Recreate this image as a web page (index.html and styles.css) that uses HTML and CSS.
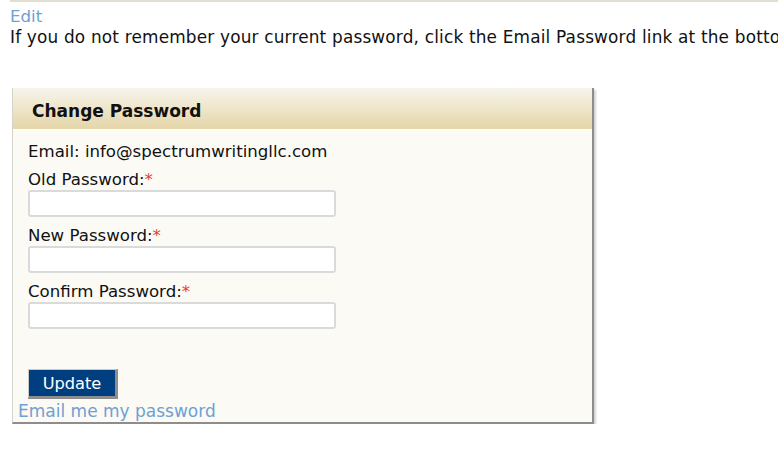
FILE: index.html
```html
<!DOCTYPE html>
<html>
<head>
<meta charset="utf-8">
<link rel="stylesheet" href="styles.css">
</head>
<body>
<div class="page">
  <div class="topline"></div>
  <a class="link edit" href="#">Edit</a>
  <p class="intro">If you do not remember your current password, click the Email Password link at the bottom of this form.</p>
  <div class="panel">
    <div class="panel-head">Change Password</div>
    <div class="panel-body">
      <div class="email">Email: info@spectrumwritingllc.com</div>
      <label class="lbl">Old Password:<span class="req">*</span></label>
      <input class="field" type="password">
      <label class="lbl">New Password:<span class="req">*</span></label>
      <input class="field" type="password">
      <label class="lbl">Confirm Password:<span class="req">*</span></label>
      <input class="field" type="password">
      <button class="btn" type="button">Update</button>
    </div>
    <a class="link mail" href="#">Email me my password</a>
  </div>
</div>
</body>
</html>
```
FILE: styles.css
```css
html, body {
  margin: 0;
  padding: 0;
  background: #ffffff;
  overflow: hidden;
}
body {
  font-family: "DejaVu Sans", Verdana, sans-serif;
  font-size: 16.6px;
  color: #111111;
}
.page {
  padding-left: 10px;
}
.topline {
  height: 2px;
  background: #e2ded2;
}
.link {
  color: #6f9fd3;
  text-decoration: none;
}
.edit {
  display: block;
  margin-top: 5px;
  line-height: 20px;
}
.intro {
  margin: 0;
  line-height: 20px;
  font-size: 16.9px;
  letter-spacing: 0.18px;
  white-space: nowrap;
  overflow: hidden;
}
.panel {
  margin-top: 41px;
  margin-left: 2px;
  width: 579px;
  background: #fbfaf5;
  border-left: 1px solid #d6d3cb;
  border-right: 2px solid #8d8d8d;
  border-bottom: 2px solid #8d8d8d;
  box-shadow: 2px 2px 2px rgba(0,0,0,0.18);
  padding-bottom: 1px;
}
.panel-head {
  height: 42px;
  box-sizing: border-box;
  padding: 13px 0 0 19px;
  font-weight: bold;
  font-size: 17px;
  line-height: 20px;
  background: linear-gradient(#f7f4ec, #e5d6a8);
  border-bottom: 1px solid #ffffff;
}
.panel-body {
  padding: 13px 0 0 15px;
  display: flex;
  flex-direction: column;
  align-items: flex-start;
}
.email {
  line-height: 18px;
}
.lbl {
  margin-top: 9px;
  line-height: 20px;
}
.req {
  color: #f03a30;
}
.field {
  margin: 0;
  width: 308px;
  height: 27px;
  box-sizing: border-box;
  border: 2px solid #dadada;
  border-radius: 3px;
  background: #ffffff;
  padding: 0;
}
.btn {
  margin-top: 40px;
  width: 90px;
  height: 30px;
  box-sizing: border-box;
  background: #003f7f;
  color: #ffffff;
  font-family: "DejaVu Sans", Verdana, sans-serif;
  font-size: 16.2px;
  border-top: 1px solid #c9c9c9;
  border-left: 1px solid #c9c9c9;
  border-right: 3px solid #8e8e8e;
  border-bottom: 3px solid #8e8e8e;
  padding: 0;
}
.mail {
  display: block;
  margin-top: 2px;
  margin-left: 5px;
  line-height: 20px;
  font-size: 17px;
}
```
